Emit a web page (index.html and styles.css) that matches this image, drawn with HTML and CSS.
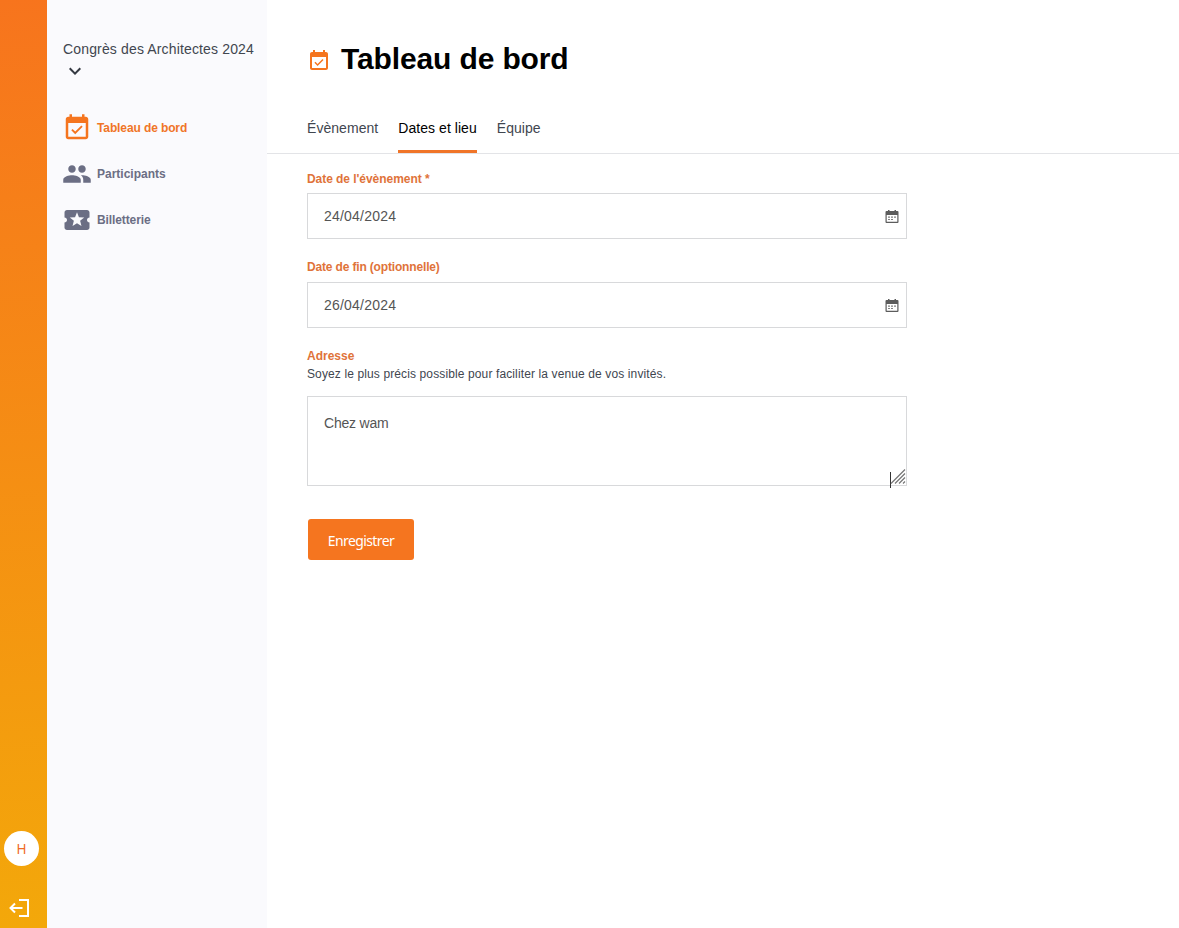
FILE: index.html
```html
<!DOCTYPE html>
<html lang="fr">
<head>
<meta charset="utf-8">
<title>Tableau de bord</title>
<link rel="stylesheet" href="styles.css">
</head>
<body>
<svg class="sprite" aria-hidden="true">
  <symbol id="event" viewBox="0 0 24 24"><path d="M16.53 11.06 15.47 10l-4.88 4.88-2.12-2.12-1.06 1.06L10.59 17l5.94-5.94zM19 3h-1V1h-2v2H8V1H6v2H5c-1.11 0-1.99.9-1.99 2L3 19c0 1.1.89 2 2 2h14c1.1 0 2-.9 2-2V5c0-1.1-.9-2-2-2zm0 16H5V8h14v11z"/></symbol>
  <symbol id="date" viewBox="0 0 14 13"><path fill="#5c5c5c" fill-rule="evenodd" d="M.5 2q0-1 1-1H3V0h1.500v1h5V0H11v1h1.500q1 0 1 1v10q0 1-1 1h-11q-1 0-1-1zM1.700 5v6.800h10.600V5z"/><path fill="none" stroke="#808080" stroke-width="1.200" stroke-dasharray="2 1" d="M3 7.200h8M3 9.500h5"/></symbol>
</svg>
<div class="app">
  <aside class="rail">
    <div class="avatar">H</div>
    <a class="logout"><svg viewBox="0 0 22 20"><path d="M11 2h9v16h-9M2.500 10H14.500M7 5.500 2.500 10 7 14.500" fill="none" stroke="#fff" stroke-width="2"/></svg></a>
  </aside>
  <nav class="sidebar">
    <div class="event-name">Congrès des Architectes 2024</div>
    <svg class="chevron" viewBox="0 0 24 24"><path d="M16.590 8.590 12 13.170 7.410 8.590 6 10l6 6 6-6z"/></svg>
    <ul class="menu">
      <li class="menu-item active"><svg><use href="#event"/></svg><span>Tableau de bord</span></li>
      <li class="menu-item"><svg viewBox="0 0 24 24"><path d="M16 11c1.660 0 2.990-1.340 2.990-3S17.660 5 16 5s-3 1.340-3 3 1.340 3 3 3zm-8 0c1.660 0 2.990-1.340 2.990-3S9.660 5 8 5 5 6.340 5 8s1.340 3 3 3zm0 2c-2.330 0-7 1.170-7 3.500V19h14v-2.500c0-2.330-4.670-3.500-7-3.500zm8 0c-.29 0-.62.02-.97.05 1.160.84 1.970 1.970 1.970 3.450V19h6v-2.500c0-2.330-4.670-3.500-7-3.500z"/></svg><span class="participants">Participants</span></li>
      <li class="menu-item"><svg viewBox="0 0 24 24"><path d="M20 12c0-1.100.9-2 2-2V6c0-1.100-.9-2-2-2H4c-1.100 0-1.990.9-1.990 2v4c1.100 0 1.990.9 1.990 2s-.89 2-2 2v4c0 1.100.9 2 2 2h16c1.100 0 2-.9 2-2v-4c-1.100 0-2-.9-2-2zm-4.420 4.800L12 14.500l-3.580 2.300 1.080-4.120-3.290-2.690 4.240-.25L12 5.800l1.540 3.950 4.240.25-3.290 2.690 1.090 4.110z"/></svg><span>Billetterie</span></li>
    </ul>
  </nav>
  <main class="content">
    <header class="page-head">
      <svg><use href="#event"/></svg>
      <h1>Tableau de bord</h1>
    </header>
    <div class="tabs"><a class="tab">Évènement</a><a class="tab selected">Dates et lieu</a><a class="tab">Équipe</a></div>
    <form class="form">
      <label class="label">Date de l'évènement *</label>
      <div class="field"><span>24/04/2024</span><svg><use href="#date"/></svg></div>
      <label class="label end-date">Date de fin (optionnelle)</label>
      <div class="field"><span>26/04/2024</span><svg><use href="#date"/></svg></div>
      <label class="label address">Adresse</label>
      <p class="hint">Soyez le plus précis possible pour faciliter la venue de vos invités.</p>
      <div class="area">Chez wam<svg class="grip" viewBox="0 0 18 20"><path d="M1.500 3v16" stroke="#333"/><path d="m2 14.500 14-14M6 14.500l10-10M10 14.500l6-6M14 14.500l2-2" stroke="#777" stroke-width="1.200"/></svg></div>
      <button class="submit" type="button">Enregistrer</button>
    </form>
  </main>
</div>
</body>
</html>
```
FILE: styles.css
```css
* { box-sizing: border-box; }
body { margin: 0; background: #fff; font-family: "Liberation Sans", Arial, sans-serif; font-size: 14px; color: #41464f; }
.sprite { display: none; }
.app { display: flex; height: 928px; overflow: hidden; }

.rail { flex: 0 0 47px; padding: 0 0 10px 4px; display: flex; flex-direction: column; justify-content: flex-end; background: linear-gradient(175deg, #f7741d, #f3a80a); }
.avatar { width: 35px; height: 35px; border-radius: 50%; background: #fff; color: #f06a25; font: 13.5px/36px "Noto Sans", sans-serif; text-align: center; }
.logout { margin: 32px 0 0 4px; height: 20px; }
.logout svg { display: block; width: 22px; height: 20px; }

.sidebar { flex: 0 0 220px; padding: 39px 0 0 16px; background: #fafafd; }
.event-name { line-height: 20px; white-space: nowrap; letter-spacing: .15px; }
.chevron { display: block; width: 24px; height: 24px; fill: #343942; }
.menu { list-style: none; margin: 22px 0 0; padding: 0; }
.menu-item { display: flex; align-items: center; gap: 5px; height: 46px; margin-left: -1px; font-size: 12px; font-weight: 700; letter-spacing: -.11px; color: #6b6e84; fill: #6b6e84; }
.menu-item svg { width: 30px; height: 30px; }
.menu-item .participants { letter-spacing: 0; }
.menu-item.active { color: #f07528; fill: #f5751f; }

.content { flex: 1; min-width: 0; }
.page-head { display: flex; align-items: center; gap: 10px; height: 104px; padding: 14px 0 0 40px; }
.page-head svg { width: 24px; height: 24px; fill: #f5751f; margin-top: 3px; }
h1 { margin: 0; font-size: 30px; line-height: 36px; letter-spacing: -.13px; color: #000; }
.tabs { display: flex; gap: 20px; height: 50px; padding-left: 40px; border-bottom: 1px solid #e3e4e7; }
.tab { height: 49px; line-height: 48px; letter-spacing: .05px; }
.selected { color: #000; border-bottom: 3px solid #f07528; }

.form { width: 640px; padding: 16px 0 0 40px; }
.label { display: block; height: 18px; line-height: 18px; font-size: 12px; font-weight: 700; letter-spacing: -.05px; color: #e0733a; }
.end-date { line-height: 16px; letter-spacing: -.16px; }
.address { height: 17px; line-height: 16px; letter-spacing: 0; }
.field { display: flex; align-items: center; justify-content: space-between; height: 46px; margin: 5px 0 20px; padding: 0 7px 0 16px; border: 1px solid #d8d9db; letter-spacing: .21px; color: #555; }
.field svg { width: 14px; height: 13px; }
.hint { margin: 0; line-height: 18px; font-size: 12px; letter-spacing: .12px; }
.area { position: relative; height: 90px; margin-top: 13px; padding: 16px; border: 1px solid #d8d9db; line-height: 20px; letter-spacing: -.2px; color: #555; }
.grip { position: absolute; right: -1px; bottom: -4px; width: 18px; height: 20px; fill: none; }
.submit { display: block; width: 106px; height: 41px; margin: 33px 0 0 1px; padding: 3px 0 0; border: 0; border-radius: 3px; background: #f5751f; color: #fff; font: 14px/20px "Noto Sans", sans-serif; letter-spacing: -.6px; }
```
